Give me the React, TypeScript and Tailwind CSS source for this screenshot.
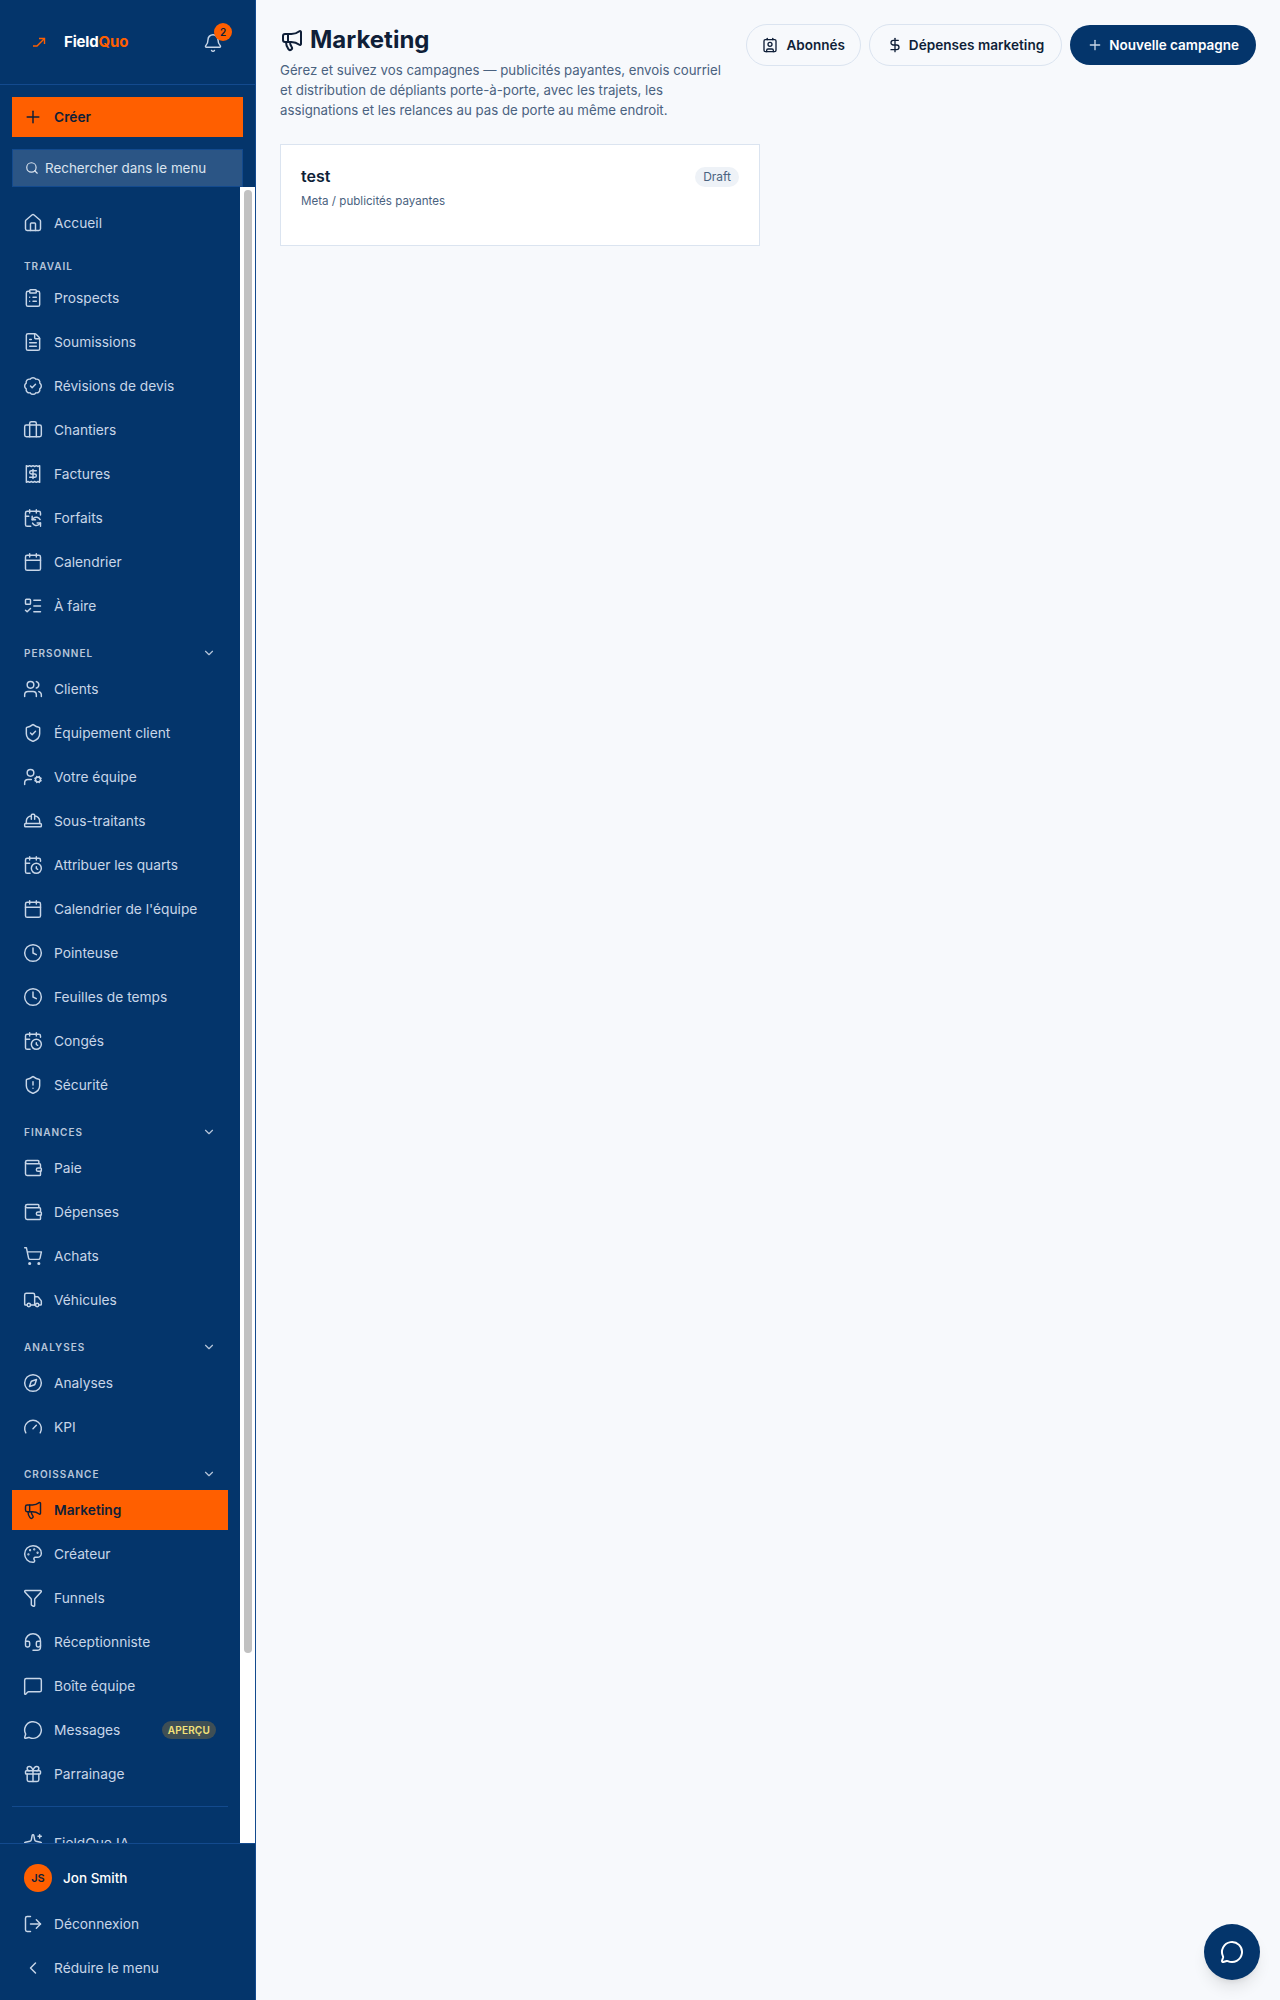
import {
  House, ClipboardList, FileText, BadgeCheck, Briefcase, Receipt, CalendarSync, Calendar, ListTodo,
  Users, ShieldCheck, UserCog, HardHat, CalendarClock, Clock, ShieldAlert, Wallet, ShoppingCart,
  Truck, Compass, Gauge, Megaphone, Palette, Funnel, Headset, MessageSquare, MessageCircle, Gift,
  Sparkles, LogOut, ChevronLeft, ChevronDown, Bell, Plus, Search, Contact, DollarSign,
} from "lucide-react";
import type { LucideIcon } from "lucide-react";

type NavItem = { label: string; icon: LucideIcon; active?: boolean; badge?: string };
type NavSection = { title: string; collapsible?: boolean; items: NavItem[] };

const sections: NavSection[] = [
  {
    title: "Travail",
    items: [
      { label: "Prospects", icon: ClipboardList },
      { label: "Soumissions", icon: FileText },
      { label: "Révisions de devis", icon: BadgeCheck },
      { label: "Chantiers", icon: Briefcase },
      { label: "Factures", icon: Receipt },
      { label: "Forfaits", icon: CalendarSync },
      { label: "Calendrier", icon: Calendar },
      { label: "À faire", icon: ListTodo },
    ],
  },
  {
    title: "Personnel",
    collapsible: true,
    items: [
      { label: "Clients", icon: Users },
      { label: "Équipement client", icon: ShieldCheck },
      { label: "Votre équipe", icon: UserCog },
      { label: "Sous-traitants", icon: HardHat },
      { label: "Attribuer les quarts", icon: CalendarClock },
      { label: "Calendrier de l'équipe", icon: Calendar },
      { label: "Pointeuse", icon: Clock },
      { label: "Feuilles de temps", icon: Clock },
      { label: "Congés", icon: CalendarClock },
      { label: "Sécurité", icon: ShieldAlert },
    ],
  },
  {
    title: "Finances",
    collapsible: true,
    items: [
      { label: "Paie", icon: Wallet },
      { label: "Dépenses", icon: Wallet },
      { label: "Achats", icon: ShoppingCart },
      { label: "Véhicules", icon: Truck },
    ],
  },
  {
    title: "Analyses",
    collapsible: true,
    items: [
      { label: "Analyses", icon: Compass },
      { label: "KPI", icon: Gauge },
    ],
  },
  {
    title: "Croissance",
    collapsible: true,
    items: [
      { label: "Marketing", icon: Megaphone, active: true },
      { label: "Créateur", icon: Palette },
      { label: "Funnels", icon: Funnel },
      { label: "Réceptionniste", icon: Headset },
      { label: "Boîte équipe", icon: MessageSquare },
      { label: "Messages", icon: MessageCircle, badge: "APERÇU" },
      { label: "Parrainage", icon: Gift },
    ],
  },
];

function NavRow({ item }: { item: NavItem }) {
  const Icon = item.icon;
  return (
    <a
      className={
        "flex h-10 items-center gap-[11px] pl-[11px] pr-3 text-[13.75px] " +
        (item.active ? "bg-[#ff5f00] font-semibold text-[#0f1f38]" : "text-[#c8d6e8]")
      }
    >
      <Icon className="h-5 w-5 shrink-0" strokeWidth={1.75} />
      <span className="flex-1 truncate">{item.label}</span>
      {item.badge && (
        <span className="flex h-[18px] items-center rounded-full bg-[#3f4f55] px-1.5 text-[10px] font-semibold tracking-[0.02em] text-[#f5e27a]">
          {item.badge}
        </span>
      )}
    </a>
  );
}

function Sidebar() {
  return (
    <aside className="flex h-screen w-64 shrink-0 flex-col border-r border-[#134a8e] bg-[#04356b]">
      {/* Logo */}
      <div className="flex h-[85px] shrink-0 items-center justify-between border-b border-[#134a8e] pl-[32px] pr-[31px]">
        <div className="flex items-center gap-[18px]">
          <svg viewBox="0 0 14 12" className="h-3 w-3.5 text-[#ff5f00]" fill="none" stroke="currentColor" strokeWidth="1.4">
            <path d="M1 10h4l7-7" />
            <path d="M7 2.5h5.5V8" />
          </svg>
          <span className="text-[15px] font-bold tracking-[-0.01em] text-white">
            Field<span className="text-[#ff5f00]">Quo</span>
          </span>
        </div>
        <div className="relative mr-[1px] mt-[2px]">
          <Bell className="h-5 w-5 text-[#c8d6e8]" strokeWidth={1.75} />
          <span className="absolute -right-[9px] -top-[10px] flex h-[18px] w-[18px] items-center justify-center rounded-full bg-[#ff5f00] text-[10px] font-semibold text-[#0f1f38]">
            2
          </span>
        </div>
      </div>

      {/* Créer + recherche */}
      <div className="shrink-0 px-3 pt-3">
        <button className="flex h-10 w-full items-center gap-[11px] bg-[#ff5f00] pl-[11px] pr-3 text-[13.75px] font-semibold text-[#0f1f38]">
          <Plus className="h-5 w-5" strokeWidth={1.75} />
          Créer
        </button>
        <div className="mt-3 flex h-[38px] items-center gap-1.5 border border-[#134a8e] bg-[#2b5585] px-3 text-[13.4px] text-[#dbe4ef]">
          <Search className="h-[14px] w-[14px]" />
          Rechercher dans le menu
        </div>
      </div>

      {/* Nav + barre de défilement */}
      <div className="flex min-h-0 flex-1">
        <nav className="min-w-0 flex-1 overflow-hidden px-3 pt-4">
          <NavRow item={{ label: "Accueil", icon: House }} />
          {sections.map((section) => (
            <div key={section.title} className="mt-[15px]">
              <div
                className={
                  "mb-1 flex items-center justify-between px-3 text-[10px] font-semibold uppercase tracking-[0.1em] text-[#b7c6da] " +
                  (section.collapsible ? "h-6" : "h-4")
                }
              >
                {section.title}
                {section.collapsible && <ChevronDown className="h-3.5 w-3.5" />}
              </div>
              <div className="flex flex-col gap-1">
                {section.items.map((item) => (
                  <NavRow key={item.label} item={item} />
                ))}
              </div>
            </div>
          ))}
          <div className="mt-3 border-t border-[#134a8e] pt-4">
            <NavRow item={{ label: "FieldQuo IA", icon: Sparkles }} />
          </div>
        </nav>
        <div className="w-[15px] shrink-0 bg-white pl-1 pt-[3px]">
          <div className="h-[1463px] w-2 rounded-full bg-[#c1c1c1]" />
        </div>
      </div>

      {/* Footer */}
      <div className="shrink-0 border-t border-[#134a8e] px-3 pb-3 pt-[14px]">
        <div className="flex h-10 items-center gap-[11px] px-3 text-[13.5px] font-medium text-white">
          <div className="flex h-7 w-7 items-center justify-center rounded-full bg-[#ff5f00] text-[11px] font-semibold text-[#0f1f38]">
            JS
          </div>
          Jon Smith
        </div>
        <div className="mt-[6px] flex flex-col gap-1">
          <NavRow item={{ label: "Déconnexion", icon: LogOut }} />
          <NavRow item={{ label: "Réduire le menu", icon: ChevronLeft }} />
        </div>
      </div>
    </aside>
  );
}

export default function App() {
  return (
    <div className="flex h-screen overflow-hidden bg-[#f7f9fc] font-['Inter',sans-serif]">
      <Sidebar />
      <main className="relative flex-1 p-6">
        <div className="flex items-start justify-between">
          <div>
            <div className="flex items-center gap-1.5">
              <Megaphone className="h-6 w-6 text-[#0f1f38]" strokeWidth={2} />
              <h1 className="text-2xl font-bold text-[#0f1f38]">Marketing</h1>
            </div>
            <p className="mt-1 max-w-md text-[13.25px] leading-5 text-[#4a6280]">
              Gérez et suivez vos campagnes — publicités payantes, envois courriel et distribution de dépliants
              porte-à-porte, avec les trajets, les assignations et les relances au pas de porte au même endroit.
            </p>
          </div>
          <div className="flex items-center gap-2">
            <button className="flex h-[42px] items-center gap-2 rounded-full border border-[#dbe4f0] px-[15px] text-[13.5px] font-semibold text-[#0f1f38]">
              <Contact className="h-4 w-4" />
              Abonnés
            </button>
            <button className="flex h-[42px] items-center gap-1.5 rounded-full border border-[#dbe4f0] px-[17px] text-[13.6px] font-semibold text-[#0f1f38]">
              <DollarSign className="h-4 w-4" />
              Dépenses marketing
            </button>
            <button className="flex h-10 items-center gap-1.5 rounded-full bg-[#04356b] px-[17px] text-[13.5px] font-semibold text-white">
              <Plus className="h-4 w-4 text-[#c8d6e8]" />
              Nouvelle campagne
            </button>
          </div>
        </div>

        <div className="mt-6 w-[480px] border border-[#dbe4f0] bg-white px-5 pb-9 pt-5">
          <div className="flex h-6 items-center justify-between">
            <span className="pb-[2px] text-base font-semibold text-[#0f1f38]">test</span>
            <span className="flex h-5 items-center rounded-full bg-[#eef2f7] px-2 text-xs text-[#4a6280]">Draft</span>
          </div>
          <p className="mt-1 text-[11.6px] leading-4 text-[#4a6280]">Meta / publicités payantes</p>
        </div>

        <button className="absolute bottom-5 right-5 flex h-14 w-14 items-center justify-center rounded-full bg-[#04356b] text-white shadow-lg">
          <MessageCircle className="h-6 w-6" strokeWidth={2} />
        </button>
      </main>
    </div>
  );
}
